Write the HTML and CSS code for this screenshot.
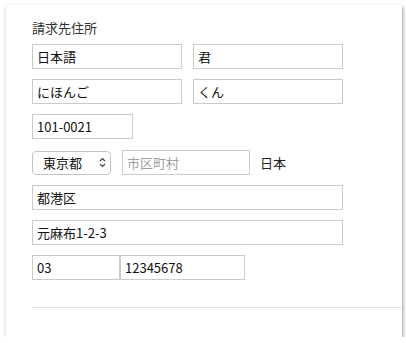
FILE: index.html
```html
<!DOCTYPE html>
<html lang="ja">
<head>
<meta charset="utf-8">
<link rel="stylesheet" href="styles.css">
</head>
<body>
<div class="card">
  <div class="title">請求先住所</div>
  <div class="form">
    <div class="row">
      <input class="field name" type="text" value="日本語">
      <input class="field name" type="text" value="君">
    </div>
    <div class="row">
      <input class="field name" type="text" value="にほんご">
      <input class="field name" type="text" value="くん">
    </div>
    <div class="row">
      <input class="field zip" type="text" value="101-0021">
    </div>
    <div class="row pref-row">
      <div class="select-wrap">
        <select class="pref"><option>東京都</option></select>
        <svg class="chev" width="7" height="11" viewBox="0 0 7 11"><path d="M1 4 L3.5 1.5 L6 4 M1 7 L3.5 9.5 L6 7" fill="none" stroke="#444" stroke-width="1.2"/></svg>
      </div>
      <input class="field city" type="text" placeholder="市区町村">
      <span class="country">日本</span>
    </div>
    <div class="row">
      <input class="field long" type="text" value="都港区">
    </div>
    <div class="row">
      <input class="field long" type="text" value="元麻布1-2-3">
    </div>
    <div class="row tel">
      <input class="field tel1" type="text" value="03">
      <input class="field tel2" type="text" value="12345678">
    </div>
  </div>
  <div class="rule"></div>
</div>
</body>
</html>
```
FILE: styles.css
```css
html, body {
  margin: 0;
  padding: 0;
  background: #fff;
}
body {
  font-family: "Liberation Sans Narrow", "Noto Sans CJK JP", "DejaVu Sans", sans-serif;
  font-size: 13px;
  color: #222;
}
.card {
  box-sizing: border-box;
  width: 396px;
  height: 332px;
  margin: 5px 0 0 6px;
  padding: 15px 0 0 26px;
  background: #fff;
  box-shadow: 1px 2px 4px rgba(0, 0, 0, 0.4);
}
.title {
  font-size: 13px;
  line-height: 16px;
  color: #333;
  margin-bottom: 8px;
}
.form {
  display: flex;
  flex-direction: column;
  gap: 10px;
}
.row {
  display: flex;
  align-items: center;
  gap: 11px;
}
.pref-row {
  margin-top: 1px;
}
.field {
  box-sizing: border-box;
  height: 25px;
  margin: 0;
  padding: 0 4px;
  border: 1px solid #cbcbcb;
  border-radius: 0;
  background: #fff;
  font-family: "Liberation Sans Narrow", "Noto Sans CJK JP", sans-serif;
  font-size: 13px;
  color: #111;
  outline: none;
}
.field::placeholder {
  color: #a0a0a0;
}
.name { width: 150px; }
.zip { width: 101px; }
.long { width: 311px; }
.city { width: 128px; }
.tel { gap: 0; }
.tel1 { width: 88px; }
.tel2 { width: 125px; }
.select-wrap {
  position: relative;
  width: 79px;
  height: 24px;
}
.pref {
  appearance: none;
  -webkit-appearance: none;
  box-sizing: border-box;
  width: 79px;
  height: 24px;
  margin: 0;
  padding: 0 0 0 10px;
  border: 1px solid #c4c4c4;
  border-radius: 4px;
  background: #fff;
  font-family: "Noto Sans CJK JP", sans-serif;
  font-size: 13px;
  color: #111;
}
.chev {
  position: absolute;
  right: 5px;
  top: 6px;
}
.country {
  margin-left: -1px;
  color: #222;
}
.rule {
  margin-top: 27px;
  height: 1px;
  background: #e2e2e2;
}
```
